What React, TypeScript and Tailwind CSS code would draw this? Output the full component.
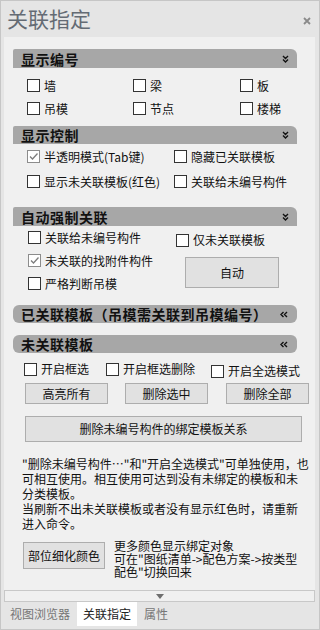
import React from "react";

const F = "font-['Noto_Sans_CJK_SC','Noto_Sans',sans-serif]";

function Box({ checked = false }: { checked?: boolean }) {
  return (
    <span
      className={`relative inline-block w-[13px] h-[13px] shrink-0 bg-white border ${
        checked ? "border-[#8c8c8c]" : "border-[#333333]"
      }`}
    >
      {checked && (
        <svg viewBox="0 0 11 11" className="absolute left-0 top-0 w-[11px] h-[11px]">
          <path d="M2 5.5 L4.5 8 L9.5 2.5" fill="none" stroke="#7d7d7d" strokeWidth="1.3" />
        </svg>
      )}
    </span>
  );
}

function Check({ label, checked = false, className = "" }: { label: string; checked?: boolean; className?: string }) {
  return (
    <div className={`flex items-center gap-[4px] text-[12px] leading-[14px] text-[#111] whitespace-nowrap ${className}`}>
      <Box checked={checked} />
      <span>{label}</span>
    </div>
  );
}

function Header({ title, open, className = "" }: { title: string; open: boolean; className?: string }) {
  return (
    <div
      className={`ml-[9px] w-[284px] flex items-center justify-between bg-[#a7a7a7] pl-[8px] pr-[8px] ${
        open ? "h-[19px] rounded-tr-[6px] rounded-tl-[2px]" : "h-[18px] rounded-[6px]"
      } ${className}`}
    >
      <span className="text-[14px] leading-[16px] font-bold tracking-[0.5px] text-[#111] whitespace-nowrap">{title}</span>
      {open ? (
        <svg viewBox="0 0 7 8" className="w-[7px] h-[8px]">
          <path d="M1 1 L3.5 3.5 L6 1 M1 4.5 L3.5 7 L6 4.5" fill="none" stroke="#111" strokeWidth="1.4" />
        </svg>
      ) : (
        <svg viewBox="0 0 8 7" className="w-[8px] h-[7px] mr-[1px]">
          <path d="M3.5 1 L1 3.5 L3.5 6 M7 1 L4.5 3.5 L7 6" fill="none" stroke="#111" strokeWidth="1.4" />
        </svg>
      )}
    </div>
  );
}

function Btn({ label, className = "" }: { label: string; className?: string }) {
  return (
    <div
      className={`flex items-center justify-center bg-[#e1e1e1] border border-[#adadad] text-[12px] leading-[14px] text-[#111] whitespace-nowrap ${className}`}
    >
      {label}
    </div>
  );
}

export default function App() {
  return (
    <div className={`w-[320px] h-[630px] bg-[#e5e5e5] border border-[#c6c6c6] flex flex-col ${F}`}>
      {/* title */}
      <div className="h-[36px] flex items-center justify-between pl-[6px] pr-[8px] shrink-0">
        <span className="text-[21px] leading-[24px] text-[#646b74] mt-[-2px]">关联指定</span>
        <svg viewBox="0 0 8 8" className="w-[8px] h-[8px] mt-[4px]">
          <path d="M1 1 L7 7 M7 1 L1 7" stroke="#8a8a8a" strokeWidth="1.8" />
        </svg>
      </div>

      {/* panel */}
      <div className="ml-[3px] w-[311px] h-[553px] bg-[#f0f0f0] flex flex-col pt-[12px] shrink-0">
        <Header title="显示编号" open />
        <div className="mt-[6px] grid grid-cols-[106px_107px_1fr] pl-[23px]">
          <Check label="墙" className="h-[23px]" />
          <Check label="梁" className="h-[23px]" />
          <Check label="板" className="h-[23px]" />
          <Check label="吊模" className="h-[23px]" />
          <Check label="节点" className="h-[23px]" />
          <Check label="楼梯" className="h-[23px]" />
        </div>

        <Header title="显示控制" open className="mt-[6px] !h-[18px]" />
        <div className="grid grid-cols-[147px_1fr] pl-[23px]">
          <Check label="半透明模式(Tab键)" checked className="h-[25px]" />
          <Check label="隐藏已关联模板" className="h-[25px]" />
          <Check label="显示未关联模板(红色)" className="h-[25px]" />
          <Check label="关联给未编号构件" className="h-[25px]" />
        </div>

        <Header title="自动强制关联" open className="mt-[13px]" />
        <div className="flex">
          <div className="w-[172px] pl-[24px] flex flex-col">
            <Check label="关联给未编号构件" className="h-[23px]" />
            <Check label="未关联的找附件构件" checked className="h-[23px]" />
            <Check label="严格判断吊模" className="h-[23px]" />
          </div>
          <div className="flex flex-col">
            <Check label="仅未关联模板" className="h-[28px]" />
            <Btn label="自动" className="ml-[9px] mt-[3px] w-[94px] h-[31px]" />
          </div>
        </div>

        <Header title="已关联模板（吊模需关联到吊模编号）" open={false} className="mt-[10px]" />
        <Header title="未关联模板" open={false} className="mt-[12px]" />

        <div className="mt-[6px] h-[20px] grid grid-cols-[82px_105px_1fr] pl-[20px]">
          <Check label="开启框选" className="h-[20px]" />
          <Check label="开启框选删除" className="h-[20px]" />
          <Check label="开启全选模式" className="h-[20px] pt-[4px]" />
        </div>

        <div className="mt-[4px] flex pl-[21px]">
          <Btn label="高亮所有" className="w-[83px] h-[21px]" />
          <Btn label="删除选中" className="ml-[17px] w-[83px] h-[21px]" />
          <Btn label="删除全部" className="ml-[18px] w-[83px] h-[21px]" />
        </div>

        <Btn label="删除未编号构件的绑定模板关系" className="mt-[12px] ml-[21px] w-[277px] h-[26px]" />

        <div className="mt-[14px] pl-[18px] text-[12px] leading-[15px] text-[#111] whitespace-nowrap">
          <div>"删除未编号构件…"和"开启全选模式"可单独使用，也</div>
          <div>可相互使用。相互使用可达到没有未绑定的模板和未</div>
          <div>分类模板。</div>
          <div>当刷新不出未关联模板或者没有显示红色时，请重新</div>
          <div>进入命令。</div>
        </div>

        <div className="mt-[8px] flex">
          <Btn label="部位细化颜色" className="ml-[19px] mt-[3px] w-[82px] h-[27px]" />
          <div className="ml-[9px] text-[12px] leading-[13px] text-[#111] whitespace-nowrap">
            <div>更多颜色显示绑定对象</div>
            <div>可在"图纸清单-&gt;配色方案-&gt;按类型</div>
            <div>配色"切换回来</div>
          </div>
        </div>
      </div>

      {/* scroll strip */}
      <div className="ml-[3px] w-[311px] h-[12px] bg-[#f0f0f0] border border-[#c8c8c8] flex items-center justify-center shrink-0">
        <svg viewBox="0 0 8 5" className="w-[8px] h-[5px]">
          <path d="M0 0 L8 0 L4 5 Z" fill="#6e6e6e" />
        </svg>
      </div>

      {/* tabs */}
      <div className="flex h-[24px] pl-[3px] gap-[1px] text-[12px] leading-[14px] shrink-0">
        <div className="px-[6px] flex items-center text-[#767676]">视图浏览器</div>
        <div className="px-[6px] flex items-center bg-white text-[#222]">关联指定</div>
        <div className="px-[6px] flex items-center text-[#767676]">属性</div>
      </div>
    </div>
  );
}
